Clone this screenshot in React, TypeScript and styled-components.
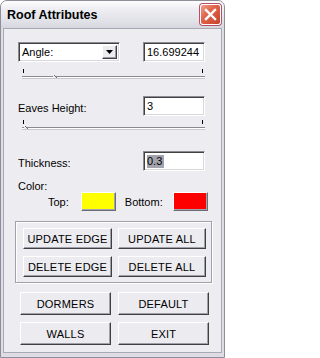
import React from "react";
import styled, { createGlobalStyle } from "styled-components";

const Global = createGlobalStyle`
  html, body { margin: 0; padding: 0; background: #ffffff; }
  body { font-family: "Liberation Sans", Arial, sans-serif; font-size: 11px; color: #000; }
`;

const Window = styled.div`
  width: 225px;
  height: 358px;
  box-sizing: border-box;
  display: flex;
  flex-direction: column;
  background: #dedde6;
  border: 1px solid #8e8e99;
  border-radius: 7px 7px 0 0;
  overflow: hidden;
`;

const TitleBar = styled.div`
  height: 27px;
  flex: none;
  display: flex;
  align-items: center;
  justify-content: space-between;
  padding: 0 3px 0 6px;
  background: linear-gradient(#fdfdfe 0%, #ececf1 35%, #e1e1e8 75%, #d6d6de 100%);
`;

const Title = styled.span`
  font-family: "Liberation Sans", Arial, sans-serif;
  font-weight: bold;
  font-size: 12.5px;
  color: #000;
  margin-top: 1px;
`;

const CloseButton = styled.div`
  width: 21px;
  height: 21px;
  box-sizing: border-box;
  border: 1px solid #ffffff;
  border-radius: 3px;
  background: linear-gradient(135deg, #f0a08c 0%, #e0654c 40%, #c8402a 100%);
  box-shadow: 0 0 0 1px #b4506a;
  display: flex;
  align-items: center;
  justify-content: center;
`;

const Client = styled.div`
  flex: 1;
  margin: 0 2px 4px 2px;
  border: 1px solid #a9a9b3;
  background: #edecf1;
  display: flex;
  flex-direction: column;
  padding: 13px 8px 0 11px;
`;

const Row = styled.div<{ $left?: number; $right?: number; $top?: number; $h?: number }>`
  display: flex;
  align-items: center;
  justify-content: space-between;
  margin-left: ${(p) => p.$left ?? 0}px;
  margin-right: ${(p) => p.$right ?? 0}px;
  margin-top: ${(p) => p.$top ?? 0}px;
  height: ${(p) => p.$h ?? 20}px;
`;

const Label = styled.span<{ $top?: number }>`
  font-size: 11px;
  line-height: 11px;
  margin-top: ${(p) => p.$top ?? 0}px;
`;

const Sunken = styled.div<{ $w: number }>`
  width: ${(p) => p.$w}px;
  height: 20px;
  box-sizing: border-box;
  background: #ffffff;
  border-top: 1px solid #8c8c94;
  border-left: 1px solid #8c8c94;
  border-right: 1px solid #ffffff;
  border-bottom: 1px solid #ffffff;
  box-shadow: inset 1px 1px 0 #404040, inset -1px -1px 0 #d8d8dc;
  display: flex;
  align-items: center;
  padding: 0 3px;
  font-size: 11px;
  overflow: hidden;
`;

const Selected = styled.span`
  background: #a3a3ad;
  color: #000;
  padding: 0 2px 0 0;
  line-height: 13px;
`;

const SelectBox = styled(Sunken)`
  justify-content: space-between;
  padding: 0 2px 0 3px;
`;

const DropButton = styled.div`
  width: 15px;
  height: 14px;
  box-sizing: border-box;
  background: #ecebf0;
  border-top: 1px solid #ffffff;
  border-left: 1px solid #ffffff;
  border-right: 1px solid #404040;
  border-bottom: 1px solid #404040;
  box-shadow: inset -1px -1px 0 #9c9ca4;
  display: flex;
  align-items: center;
  justify-content: center;
`;

const SliderWrap = styled.div<{ $top: number }>`
  margin-top: ${(p) => p.$top}px;
  margin-left: 7px;
  height: 13px;
  display: flex;
`;

const Swatch = styled.div<{ $color: string }>`
  width: 35px;
  height: 19px;
  box-sizing: border-box;
  background: ${(p) => p.$color};
  border-top: 1px solid #ffffff;
  border-left: 1px solid #ffffff;
  border-right: 1px solid #6c6c74;
  border-bottom: 1px solid #6c6c74;
  box-shadow: inset -1px -1px 0 #a4a4ac;
`;

const ColorRow = styled.div`
  display: flex;
  align-items: center;
  height: 19px;
`;

const SwatchLabel = styled.span<{ $left: number; $gap: number }>`
  margin-left: ${(p) => p.$left}px;
  margin-right: ${(p) => p.$gap}px;
  font-size: 11px;
`;

const GroupBox = styled.fieldset`
  margin: 10px 0 0 0;
  padding: 6px 6px 5px 7px;
  width: 197px;
  box-sizing: border-box;
  border: 1px solid #a0a0aa;
  box-shadow: inset 1px 1px 0 #ffffff, 1px 1px 0 #ffffff;
  display: grid;
  grid-template-columns: 89px 88px;
  column-gap: 6px;
  row-gap: 7px;
  min-width: 0;
`;

const Button = styled.button<{ $h?: number }>`
  height: ${(p) => p.$h ?? 21}px;
  box-sizing: border-box;
  margin: 0;
  padding: 0;
  background: #ecebf0;
  border-top: 1px solid #ffffff;
  border-left: 1px solid #ffffff;
  border-right: 1px solid #404040;
  border-bottom: 1px solid #404040;
  box-shadow: inset -1px -1px 0 #a0a0a8;
  font-family: "Liberation Sans", Arial, sans-serif;
  font-size: 11px;
  color: #000;
  letter-spacing: 0.2px;
`;

const BottomGrid = styled.div`
  margin: 9px 0 0 5px;
  display: grid;
  grid-template-columns: 91px 91px;
  column-gap: 7px;
  row-gap: 7px;
`;

const Slider: React.FC<{ thumb: number }> = ({ thumb }) => (
  <svg width="183" height="13" viewBox="0 0 183 13">
    <rect x="1" y="1" width="1" height="4" fill="#000" />
    <rect x="180" y="1" width="1" height="4" fill="#000" />
    <rect x="0" y="8" width="183" height="1" fill="#8a8a92" />
    <rect x="0" y="9" width="183" height="1" fill="#ffffff" />
    <rect x="0" y="10" width="183" height="1" fill="#c8c8d0" />
    <path d={`M${thumb} 8 L${thumb + 2} 8 L${thumb + 4} 10 L${thumb} 10 Z`} fill="#ecebf0" />
    <path d={`M${thumb} 7 L${thumb + 1} 7 L${thumb + 3} 9`} stroke="#ffffff" strokeWidth="1" fill="none" />
    <path d={`M${thumb + 1} 7 L${thumb + 4} 10`} stroke="#6c6c74" strokeWidth="1" fill="none" />
  </svg>
);

export default function App() {
  return (
    <>
      <Global />
      <Window>
        <TitleBar>
          <Title>Roof Attributes</Title>
          <CloseButton>
            <svg width="13" height="13" viewBox="0 0 13 13">
              <path d="M2 2 L11 11 M11 2 L2 11" stroke="#ffffff" strokeWidth="2.4" strokeLinecap="square" />
            </svg>
          </CloseButton>
        </TitleBar>
        <Client>
          <Row $left={3} $right={8}>
            <SelectBox $w={102}>
              <span>Angle:</span>
              <DropButton>
                <svg width="7" height="4" viewBox="0 0 7 4">
                  <path d="M0 0 H7 L3.5 4 Z" fill="#000" />
                </svg>
              </DropButton>
            </SelectBox>
            <Sunken $w={62}>16.699244</Sunken>
          </Row>
          <SliderWrap $top={6}>
            <Slider thumb={31} />
          </SliderWrap>
          <Row $left={3} $right={8} $top={15}>
            <Label $top={5}>Eaves Height:</Label>
            <Sunken $w={62}>3</Sunken>
          </Row>
          <SliderWrap $top={3}>
            <Slider thumb={2} />
          </SliderWrap>
          <Row $left={3} $right={8} $top={19}>
            <Label $top={5}>Thickness:</Label>
            <Sunken $w={62}>
              <Selected>0.3</Selected>
            </Sunken>
          </Row>
          <Row $left={3} $top={10} $h={11}>
            <Label>Color:</Label>
          </Row>
          <ColorRow>
            <SwatchLabel $left={33} $gap={12}>Top:</SwatchLabel>
            <Swatch $color="#ffff00" />
            <SwatchLabel $left={9} $gap={10}>Bottom:</SwatchLabel>
            <Swatch $color="#ff0000" />
          </ColorRow>
          <GroupBox>
            <Button>UPDATE EDGE</Button>
            <Button>UPDATE ALL</Button>
            <Button>DELETE EDGE</Button>
            <Button>DELETE ALL</Button>
          </GroupBox>
          <BottomGrid>
            <Button $h={23}>DORMERS</Button>
            <Button $h={23}>DEFAULT</Button>
            <Button $h={23}>WALLS</Button>
            <Button $h={23}>EXIT</Button>
          </BottomGrid>
        </Client>
      </Window>
    </>
  );
}
